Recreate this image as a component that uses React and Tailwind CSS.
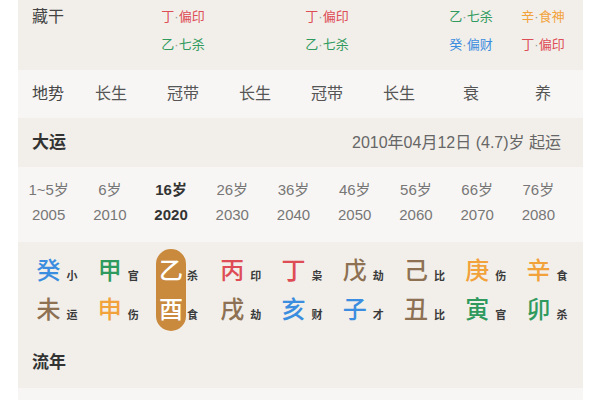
import React from 'react';

const font = { fontFamily: '"Liberation Sans", "Noto Sans CJK SC", sans-serif' };

const colors = {
  wood: 'text-[#2f9a5e]',
  fire: 'text-[#de4c55]',
  earth: 'text-[#8d7152]',
  metal: 'text-[#f2a23a]',
  water: 'text-[#3b8ddf]',
};

// 藏干 cells, per column (7 columns after the label)
const hidden = [
  [],
  [['丁', '偏印', 'fire'], ['乙', '七杀', 'wood']],
  [],
  [['丁', '偏印', 'fire'], ['乙', '七杀', 'wood']],
  [],
  [['乙', '七杀', 'wood'], ['癸', '偏财', 'water']],
  [['辛', '食神', 'metal'], ['丁', '偏印', 'fire']],
];

const terrain = ['长生', '冠带', '长生', '冠带', '长生', '衰', '养'];

const years = [
  ['1~5岁', '2005'], ['6岁', '2010'], ['16岁', '2020'], ['26岁', '2030'], ['36岁', '2040'],
  ['46岁', '2050'], ['56岁', '2060'], ['66岁', '2070'], ['76岁', '2080'],
];

const pillars = [
  [['癸', '小', 'water'], ['未', '运', 'earth']],
  [['甲', '官', 'wood'], ['申', '伤', 'metal']],
  [['乙', '杀', 'wood'], ['酉', '食', 'metal']],
  [['丙', '印', 'fire'], ['戌', '劫', 'earth']],
  [['丁', '枭', 'fire'], ['亥', '财', 'water']],
  [['戊', '劫', 'earth'], ['子', '才', 'water']],
  [['己', '比', 'earth'], ['丑', '比', 'earth']],
  [['庚', '伤', 'metal'], ['寅', '官', 'wood']],
  [['辛', '食', 'metal'], ['卯', '杀', 'wood']],
];

function Glyph({ ch, tag, el, active }) {
  return (
    <div className="relative h-[39px] flex items-center justify-center">
      <span className={`text-[24px] leading-none font-medium ${active ? 'text-white' : colors[el]}`}>{ch}</span>
      <span className={`absolute left-full top-[20px] text-[11px] leading-none font-bold text-[#3a3a3a] ${active ? 'ml-[1px]' : 'ml-[3px]'}`}>
        {tag}
      </span>
    </div>
  );
}

export default function App() {
  return (
    <div className="w-[600px] h-[400px] bg-white overflow-hidden" style={font}>
      <div className="ml-[18px] w-[565px] h-full bg-[#f7f6f4]">
        {/* 藏干 */}
        <div className="h-[70px] bg-[#f2efea] flex">
          <div className="w-[57px] pl-[14px] pt-[6px] text-[16px] leading-[22px] text-[#444]">藏干</div>
          <div className="grid grid-cols-7 w-[504px] pt-[7px]">
            {hidden.map((cell, i) => (
              <div key={i} className="flex flex-col items-center gap-[8px]">
                {cell.map(([s, g, el], j) => (
                  <div key={j} className={`text-[13px] leading-[20px] ${colors[el]}`}>
                    {s}<span className="text-[#999]">·</span>{g}
                  </div>
                ))}
              </div>
            ))}
          </div>
        </div>

        {/* 地势 */}
        <div className="h-[48px] flex items-center text-[16px] text-[#555]">
          <div className="w-[57px] pl-[14px] text-[#444]">地势</div>
          <div className="grid grid-cols-7 w-[504px]">
            {terrain.map((t, i) => (
              <div key={i} className="text-center">{t}</div>
            ))}
          </div>
        </div>

        {/* 大运 */}
        <div className="h-[49px] bg-[#f2efea] flex items-center justify-between pl-[14px] pr-[22px]">
          <span className="text-[17px] font-bold text-[#333]">大运</span>
          <span className="text-[16px] text-[#666]">2010年04月12日 (4.7)岁 起运</span>
        </div>

        <div className="h-[75px] pt-[13px]">
          <div className="grid grid-cols-9 w-[551px]">
            {years.map(([a, y], i) => (
              <div key={i} className={`flex flex-col items-center text-[15px] ${i === 2 ? 'font-bold text-[#333]' : 'text-[#777]'}`}>
                <span className="leading-[20px]">{a}</span>
                <span className="leading-[20px] mt-[5px]">{y}</span>
              </div>
            ))}
          </div>
        </div>

        {/* 干支 + 流年 */}
        <div className="bg-[#f2efea] h-[146px]">
          <div className="grid grid-cols-9 w-[551px] pt-[7px] pb-[7px]">
            {pillars.map((col, i) => {
              const active = i === 2;
              return (
                <div key={i} className="flex justify-center">
                  <div className={`w-[30px] py-[2px] rounded-full flex flex-col ${active ? 'bg-[#c98a3e]' : ''}`}>
                    {col.map(([ch, tag, el], j) => (
                      <Glyph key={j} ch={ch} tag={tag} el={el} active={active} />
                    ))}
                  </div>
                </div>
              );
            })}
          </div>
          <div className="h-[50px] flex items-center pl-[14px]">
            <span className="text-[17px] font-bold text-[#333]">流年</span>
          </div>
        </div>
      </div>
    </div>
  );
}
